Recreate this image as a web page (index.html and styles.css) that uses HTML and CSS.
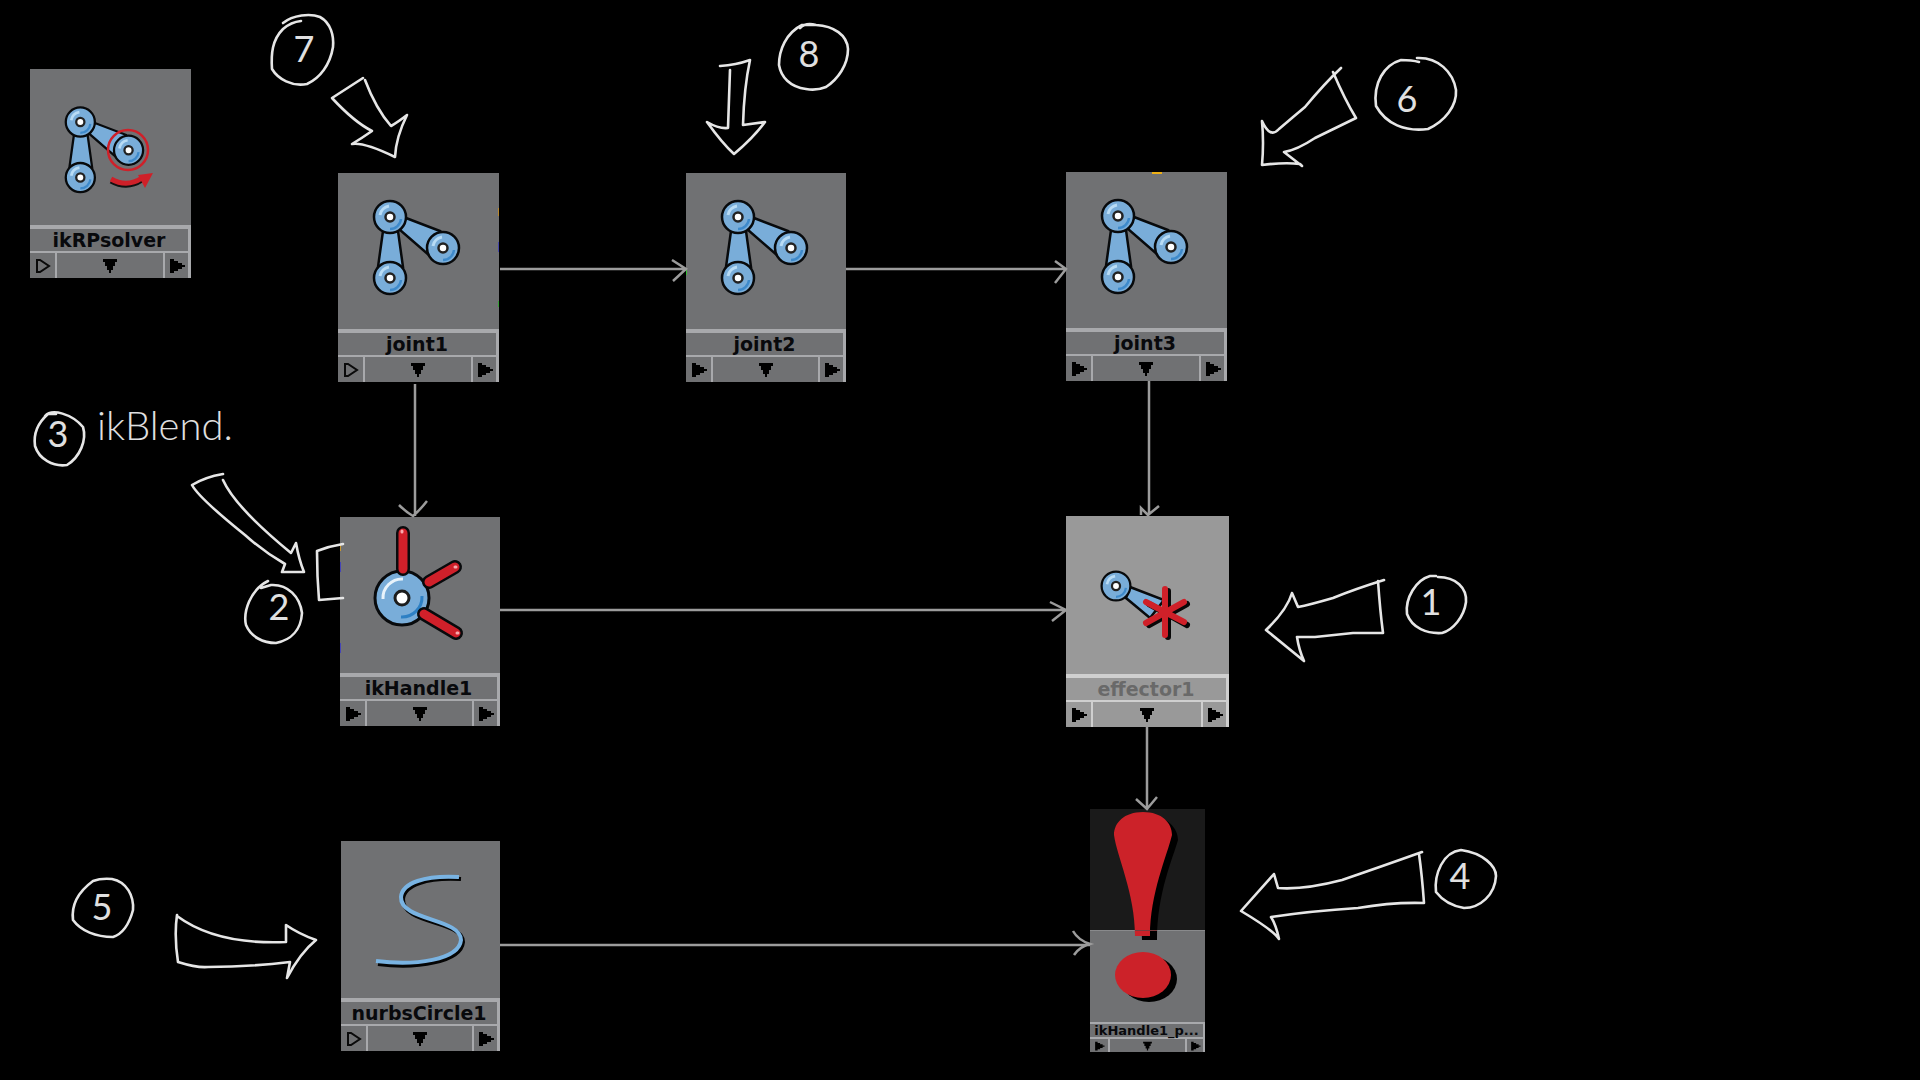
FILE: index.html
```html
<!DOCTYPE html>
<html lang="en">
<head>
<meta charset="utf-8">
<title>IK node graph</title>
<link rel="stylesheet" href="styles.css">
</head>
<body>
<svg class="defs" aria-hidden="true">
  <defs>
    <g id="disc">
      <circle r="16" fill="#79add9" stroke="#080a0c" stroke-width="2.5"/>
      <path d="M-10-2A11 11 0 0 1-1-11" fill="none" stroke="#b9dcf5" stroke-width="3"/>
      <path d="M11 2A11 11 0 0 1 0 12" fill="none" stroke="#3e8acb" stroke-width="2.5"/>
      <circle r="4.5" fill="#fff" stroke="#222" stroke-width="2.5"/>
    </g>
    <g id="joint">
      <path d="M45 58 40 94H65L60 58ZM68 45 102 58 92 83 62 57Z" fill="#79add9" stroke="#080a0c" stroke-width="2.5"/>
      <use href="#disc" x="52" y="44"/><use href="#disc" x="105" y="75"/><use href="#disc" x="52" y="105"/>
    </g>
    <symbol id="right" viewBox="0 0 16 16"><path d="M1 1H5V3H9V5H13V7H16V9H13V11H9V13H5V15H1Z"/></symbol>
    <symbol id="hollow" viewBox="0 0 16 16"><path d="M2 2H5L14 8 5 14H2Z" fill="none" stroke="#0a0a0a" stroke-width="2"/></symbol>
    <symbol id="down" viewBox="0 0 16 16"><path d="M1 1H15V4H13V8H11V12H9V15H7V12H5V8H3V4H1Z"/></symbol>
  </defs>
</svg>

<main class="graph">
  <article class="node solver">
    <svg class="pic"><g transform="translate(3 13) scale(.91)">
      <path d="M45 58 40 94H65L60 58ZM68 45 102 58 92 83 62 57Z" fill="#79add9" stroke="#080a0c" stroke-width="2.5"/>
      <use href="#disc" x="52" y="44"/><use href="#disc" x="105" y="75"/><use href="#disc" x="52" y="105"/></g>
      <circle cx="98" cy="81" r="20" fill="none" stroke="#cf2029" stroke-width="2.5"/>
      <path d="M81 112Q97 121 112 111" fill="none" stroke="#111" stroke-width="5"/>
      <path d="M81 110Q97 119 112 109" fill="none" stroke="#cf2029" stroke-width="5"/>
      <path d="M108 106 123 104 115 119Z" fill="#cf2029"/></svg>
    <h2 class="name">ikRPsolver</h2>
    <div class="ports"><button aria-label="Inputs"><svg><use href="#hollow"/></svg></button><button aria-label="Menu"><svg><use href="#down"/></svg></button><button aria-label="Outputs"><svg><use href="#right"/></svg></button></div>
  </article>

  <article class="node joint1">
    <svg class="pic"><use href="#joint"/><path d="M161 35v8" stroke="#b9882e" stroke-width="2"/><path d="M161 69v10" stroke="#4545a8" stroke-width="2"/><path d="M161 128v6" stroke="#35a035" stroke-width="2"/></svg>
    <h2 class="name">joint1</h2>
    <div class="ports"><button aria-label="Inputs"><svg><use href="#hollow"/></svg></button><button aria-label="Menu"><svg><use href="#down"/></svg></button><button aria-label="Outputs"><svg><use href="#right"/></svg></button></div>
  </article>

  <article class="node joint2">
    <svg class="pic"><use href="#joint"/><path d="M0 96v6" stroke="#35c035" stroke-width="2"/></svg>
    <h2 class="name">joint2</h2>
    <div class="ports"><button aria-label="Inputs"><svg><use href="#right"/></svg></button><button aria-label="Menu"><svg><use href="#down"/></svg></button><button aria-label="Outputs"><svg><use href="#right"/></svg></button></div>
  </article>

  <article class="node joint3">
    <svg class="pic"><use href="#joint"/><path d="M86 0h10" stroke="#eeb016" stroke-width="4"/></svg>
    <h2 class="name">joint3</h2>
    <div class="ports"><button aria-label="Inputs"><svg><use href="#right"/></svg></button><button aria-label="Menu"><svg><use href="#down"/></svg></button><button aria-label="Outputs"><svg><use href="#right"/></svg></button></div>
  </article>

  <article class="node handle">
    <svg class="pic">
      <path d="M0 28v6" stroke="#c8962e" stroke-width="2"/><path d="M0 45v10M0 126v10" stroke="#4545b8" stroke-width="2"/>
      <circle cx="62" cy="81" r="27" fill="#79add9" stroke="#080a0c" stroke-width="3"/>
      <path d="M43 82A19 19 0 0 1 63 62" fill="none" stroke="#e8f3fb" stroke-width="3"/>
      <path d="M82 79A20 20 0 0 1 61 100" fill="none" stroke="#2e80c4" stroke-width="3"/>
      <circle cx="62" cy="81" r="7" fill="#fff" stroke="#1c1c1c" stroke-width="3"/>
      <path d="M63 52V16M89 65 115 50M84 97 116 116" stroke="#080a0c" stroke-width="14" stroke-linecap="round"/>
      <path d="M63 52V16M89 65 115 50M84 97 116 116" stroke="#d0202a" stroke-width="9" stroke-linecap="round"/>
      <path d="M62 14v1M115 50h1M117 116h1" stroke="#f7a9ad" stroke-width="3" stroke-linecap="round"/></svg>
    <h2 class="name">ikHandle1</h2>
    <div class="ports"><button aria-label="Inputs"><svg><use href="#right"/></svg></button><button aria-label="Menu"><svg><use href="#down"/></svg></button><button aria-label="Outputs"><svg><use href="#right"/></svg></button></div>
  </article>

  <article class="node effector">
    <svg class="pic">
      <path d="M64 71 98 84 84 102 60 82Z" fill="#79add9" stroke="#080a0c" stroke-width="2.5"/>
      <use href="#disc" transform="translate(50 70) scale(.9)"/>
      <g fill="none" stroke-width="6" stroke-linecap="round"><path d="M102 75V121M83 88 121 109M83 109 121 88" stroke="#080808"/><path d="M99 73V119M80 86 118 106M80 107 118 86" stroke="#cf2029"/></g></svg>
    <h2 class="name">effector1</h2>
    <div class="ports"><button aria-label="Inputs"><svg><use href="#right"/></svg></button><button aria-label="Menu"><svg><use href="#down"/></svg></button><button aria-label="Outputs"><svg><use href="#right"/></svg></button></div>
  </article>

  <article class="node nurbs">
    <svg class="pic"><g fill="none" stroke-width="4"><path d="M120 38C86 36 63 44 62 58C61 84 122 79 122 101C120 121 76 128 37 123" stroke="#050505"/><path d="M118 36C84 34 61 42 60 56C59 80 120 77 120 99C118 119 74 125 35 120" stroke="#79b3e2"/></g></svg>
    <h2 class="name">nurbsCircle1</h2>
    <div class="ports"><button aria-label="Inputs"><svg><use href="#hollow"/></svg></button><button aria-label="Menu"><svg><use href="#down"/></svg></button><button aria-label="Outputs"><svg><use href="#right"/></svg></button></div>
  </article>

  <article class="node small constraint">
    <svg class="pic">
      <path d="M59 7C40 7 29 19 30 31C33 49 52 86 52 131H67C67 84 83 49 88 31C88 19 77 7 59 7Z" fill="#000"/>
      <ellipse cx="59" cy="170" rx="28" ry="23" fill="#000"/>
      <path d="M53 3C34 3 24 14 24 26C27 48 45 84 45 127H60C60 84 77 47 82 26C82 14 72 3 53 3Z" fill="#cc2229"/>
      <path d="M45 121.500H67" stroke="#7b3a3d"/>
      <ellipse cx="53" cy="166" rx="28" ry="23" fill="#cc2229"/></svg>
    <h2 class="name">ikHandle1_p...</h2>
    <div class="ports"><button aria-label="Inputs"><svg><use href="#right"/></svg></button><button aria-label="Menu"><svg><use href="#down"/></svg></button><button aria-label="Outputs"><svg><use href="#right"/></svg></button></div>
  </article>

  <svg class="layer">
    <g class="wire">
      <path d="M500 269H686M672 260 686 269 673 281"/>
      <path d="M846 269H1066M1055 261 1066 269 1055 283"/>
      <path d="M415 384V516M399 505Q406 512 413 516Q420 510 427 501"/>
      <path d="M1149 381V515M1141 515V508L1148 515 1159 506"/>
      <path d="M500 610H1066M1050 602 1066 610 1052 621"/>
      <path d="M1147 727V809M1136 799 1147 809 1157 797"/>
      <path d="M500 945H1090M1073 931Q1078 940 1090 944Q1079 947 1074 955"/>
    </g>
    <g class="ink">
      <path d="M283 23C293 15 310 13 320 17C331 23 334 36 333 47C330 65 320 78 307 84C292 87 278 79 272 69C271 54 272 40 283 29Q291 22 301 21"/>
      <path d="M363 78Q346 89 332 98C345 112 358 124 372 131Q362 138 352 144Q364 142 395 157Q396 137 407 115Q398 122 391 126Q376 109 365 80"/>
      <path d="M800 28Q806 22 816 25C834 26 847 35 848 49C848 65 838 79 826 87Q816 91 806 89C790 87 781 77 779 65C779 50 786 33 802 25H814"/>
      <path d="M720 66Q736 65 750 60Q744 88 743 125L765 122Q753 138 734 154Q722 143 707 122Q719 129 728 128L730 70"/>
      <path d="M1417 58C1438 57 1453 72 1456 90C1457 106 1445 121 1428 129C1405 132 1386 124 1376 106C1373 83 1384 65 1401 60Q1412 60 1419 62"/>
      <path d="M1341 68Q1325 83 1305 107Q1293 117 1279 129Q1270 139 1262 121Q1264 143 1262 165Q1285 162 1300 164L1302 166 1284 152Q1297 150 1315 138L1356 118Q1345 100 1333 72"/>
      <path d="M45 416C52 408 72 414 83 427C87 440 80 457 67 465C53 467 39 459 35 446C33 432 40 421 48 414L56 414"/>
      <path d="M223 474Q205 477 192 485Q199 498 245 535Q264 552 285 564L282 572H304Q299 560 296 543L291 553Q235 507 223 480"/>
      <path d="M268 581C250 590 243 612 246 625C251 637 263 643 276 643C291 640 301 630 302 613C300 597 288 584 271 585L261 588"/>
      <path d="M343 544Q330 546 317 551Q317 576 319 600L343 598"/>
      <path d="M1438 577C1456 577 1467 588 1466 602C1464 617 1453 630 1442 633C1427 634 1412 628 1407 614C1405 598 1416 580 1430 576L1436 576"/>
      <path d="M1384 580Q1355 589 1333 598Q1309 605 1298 607L1292 593Q1287 610 1266 630L1304 661Q1299 650 1297 637H1315L1353 633H1383Q1380 610 1378 581"/>
      <path d="M1461 850C1483 853 1496 866 1496 876C1495 895 1480 908 1464 908Q1446 905 1436 892C1434 874 1443 852 1461 850"/>
      <path d="M1422 852Q1380 867 1342 880Q1304 890 1278 888L1274 874 1241 911Q1273 930 1279 939Q1276 925 1271 917Q1311 911 1358 908Q1392 902 1424 903Q1422 875 1419 854"/>
      <path d="M93 881Q101 878 112 879C127 882 134 896 133 910C129 925 122 934 113 937C96 937 81 931 73 920C71 904 78 892 93 881"/>
      <path d="M177 915Q174 936 178 962Q197 968 208 967Q248 967 290 962L287 978Q300 953 316 940Q299 934 286 925V942Q216 945 177 916"/>
      <g class="hand">
        <text x="304" y="62">7</text><text x="809" y="67">8</text><text x="1407" y="112">6</text>
        <text x="58" y="447">3</text><text x="279" y="620">2</text><text x="1431" y="615">1</text>
        <text x="1460" y="889">4</text><text x="102" y="920">5</text>
        <text class="note" x="97" y="440">ikBlend.</text>
      </g>
    </g>
  </svg>
</main>
</body>
</html>
```
FILE: styles.css
```css
body {
  margin: 0;
  background: #000;
}

.defs {
  position: absolute;
  width: 0;
  height: 0;
}

.graph {
  position: relative;
  min-height: 100vh;
  overflow: hidden;
}

.layer {
  position: absolute;
  inset: 0;
  width: 100%;
  height: 100%;
  pointer-events: none;
}

.wire path {
  fill: none;
  stroke: #9c9c9c;
  stroke-width: 2.5;
}

.ink path {
  fill: none;
  stroke: #e6e6e6;
  stroke-width: 2.6;
  stroke-linecap: round;
  stroke-linejoin: round;
}

.hand {
  fill: #e0e0e0;
  font-family: Lato, "Open Sans", sans-serif;
  font-size: 36px;
  font-weight: 400;
  text-anchor: middle;
}

.hand .note {
  font-size: 40px;
  font-weight: 300;
  text-anchor: start;
}

/* Node swatches, placed freely on the canvas */
.node {
  --edge: #a8a9ac;
  position: absolute;
  box-sizing: border-box;
  display: flex;
  flex-direction: column;
  width: 161px;
  background: #707173;
}

.pic {
  display: block;
  width: 100%;
  height: 156px;
}

.name {
  margin: 0;
  border-top: 4px solid var(--edge);
  border-right: 3px solid var(--edge);
  color: #08090c;
  font: bold 19px/22px "DejaVu Sans", Verdana, sans-serif;
  text-align: center;
  white-space: nowrap;
}

.ports {
  display: grid;
  grid-template-columns: 25px 1fr 25px;
  height: 25px;
  border-top: 2px solid var(--edge);
  border-right: 3px solid var(--edge);
}

.ports button {
  display: grid;
  place-items: center;
  padding: 0;
  border: 0;
  background: none;
}

.ports button + button {
  border-left: 2px solid var(--edge);
}

.ports svg {
  width: 16px;
  height: 16px;
}

.solver { left: 30px; top: 69px; }
.joint1 { left: 338px; top: 173px; }
.joint2 { left: 686px; top: 173px; width: 160px; }
.joint3 { left: 1066px; top: 172px; }
.handle { left: 340px; top: 517px; width: 160px; }
.effector {
  --edge: #cfcfcf;
  left: 1066px;
  top: 516px;
  width: 163px;
  background: #999;
}
.effector .pic { height: 158px; }
.effector .name { color: #696969; }
.nurbs { left: 341px; top: 841px; width: 159px; }
.nurbs .pic { height: 157px; }

.constraint {
  left: 1090px;
  top: 809px;
  background: linear-gradient(#1a1a1a 121px, #898a8c 121px, #898a8c 122px, #707173 122px);
}

.small { width: 115px; }
.small .pic { height: 213px; }
.small .name {
  position: relative;
  border-width: 2px;
  border-left: 0;
  border-bottom: 0;
  font-size: 13px;
  line-height: 13px;
}
.small .ports {
  grid-template-columns: 18px 1fr 18px;
  height: 13px;
  border-right-width: 2px;
}
.small .ports svg {
  width: 11px;
  height: 10px;
}
```
